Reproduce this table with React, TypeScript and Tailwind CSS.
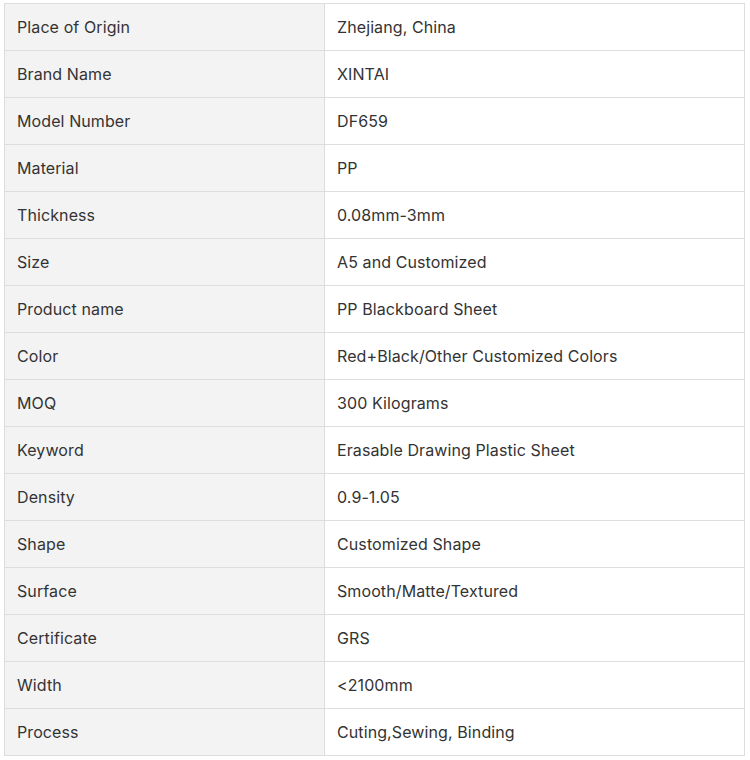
const rows: [string, string][] = [
  ["Place of Origin", "Zhejiang, China"],
  ["Brand Name", "XINTAI"],
  ["Model Number", "DF659"],
  ["Material", "PP"],
  ["Thickness", "0.08mm-3mm"],
  ["Size", "A5 and Customized"],
  ["Product name", "PP Blackboard Sheet"],
  ["Color", "Red+Black/Other Customized Colors"],
  ["MOQ", "300 Kilograms"],
  ["Keyword", "Erasable Drawing Plastic Sheet"],
  ["Density", "0.9-1.05"],
  ["Shape", "Customized Shape"],
  ["Surface", "Smooth/Matte/Textured"],
  ["Certificate", "GRS"],
  ["Width", "<2100mm"],
  ["Process", "Cuting,Sewing, Binding"],
];

export default function App() {
  return (
    <div className="w-[750px] h-[760px] bg-white pl-[4px] pt-[3px] font-['Inter',sans-serif] text-[16px] tracking-[0.1px] text-[#333]">
      <table className="w-[741px] border-collapse">
        <tbody>
          {rows.map(([label, value]) => (
            <tr key={label}>
              <td className="w-[320px] h-[47px] border border-[#ddd] bg-[#f3f3f3] px-3 align-middle">
                {label}
              </td>
              <td className="h-[47px] border border-[#ddd] px-3 align-middle">{value}</td>
            </tr>
          ))}
        </tbody>
      </table>
    </div>
  );
}
